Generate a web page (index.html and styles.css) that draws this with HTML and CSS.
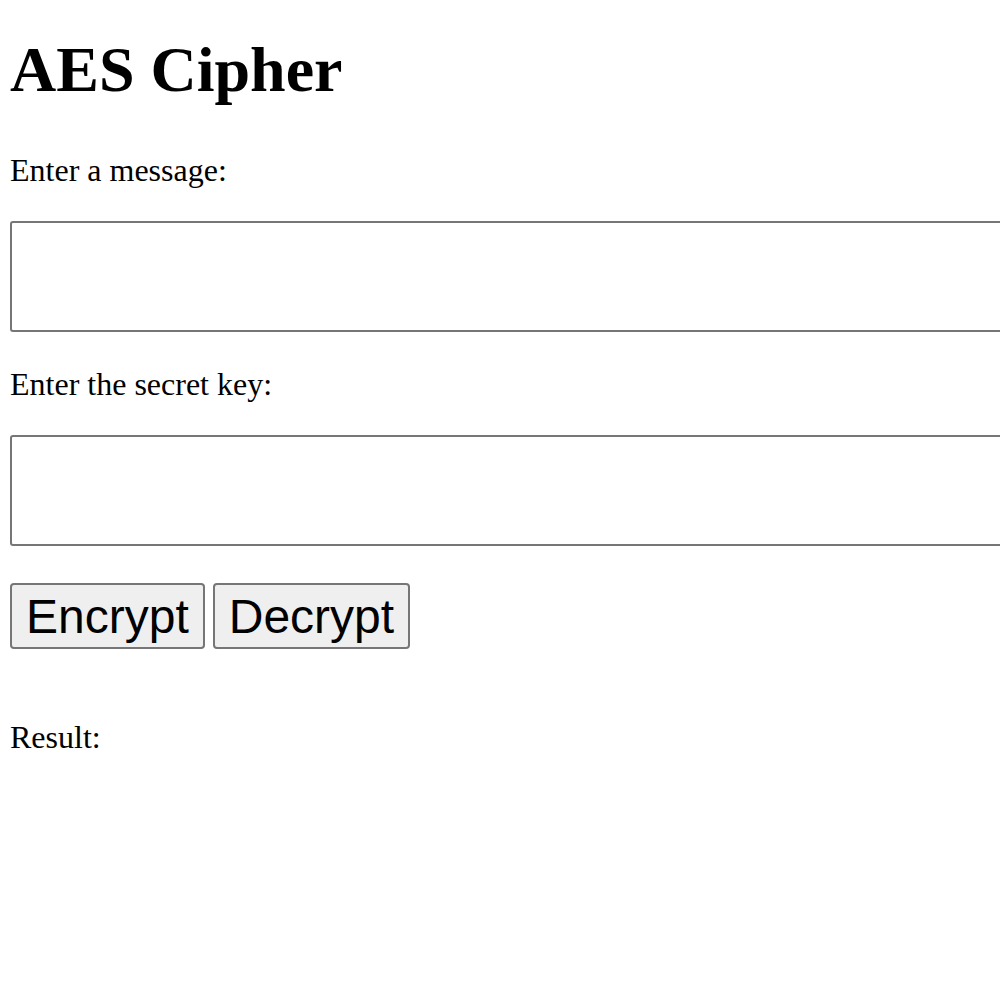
FILE: index.html
```html
<!DOCTYPE html>
<html>
<head>
<meta charset="utf-8">
<title>AES Cipher</title>
<link rel="stylesheet" href="styles.css">
</head>
<body>
<h1 class="title">AES Cipher</h1>
<label class="label" for="msg">Enter a message:</label>
<input class="field" id="msg" type="text">
<label class="label" for="key">Enter the secret key:</label>
<input class="field" id="key" type="text">
<div class="actions">
  <button class="btn">Encrypt</button>
  <button class="btn">Decrypt</button>
</div>
<p class="result">Result:</p>
</body>
</html>
```
FILE: styles.css
```css
html, body {
  margin: 0;
  background: #fff;
}
body {
  padding: 33px 10px 0 10px;
  font-family: "Liberation Serif", "Times New Roman", serif;
  font-size: 32px;
  line-height: 36px;
  color: #000;
  overflow: hidden;
}
.title {
  margin: 0;
  font-size: 64px;
  font-weight: bold;
  line-height: 74px;
}
.label {
  display: block;
  margin-top: 45px;
}
.label + .field {
  margin-top: 33px;
}
.field + .label {
  margin-top: 34px;
}
.field {
  display: block;
  box-sizing: border-box;
  width: 1100px;
  height: 111px;
  margin: 0;
  border: 2px solid #767676;
  border-radius: 3px;
  background: #fff;
  font-size: 32px;
  padding: 2px 4px;
}
.actions {
  display: flex;
  gap: 8px;
  margin-top: 37px;
}
.btn {
  box-sizing: border-box;
  height: 66px;
  padding: 0 14px;
  font-family: "Liberation Sans", Arial, sans-serif;
  font-size: 48px;
  line-height: 55px;
  color: #000;
  background: #efefef;
  border: 2px solid #767676;
  border-radius: 4px;
}
.result {
  margin: 70px 0 0 0;
}
```
